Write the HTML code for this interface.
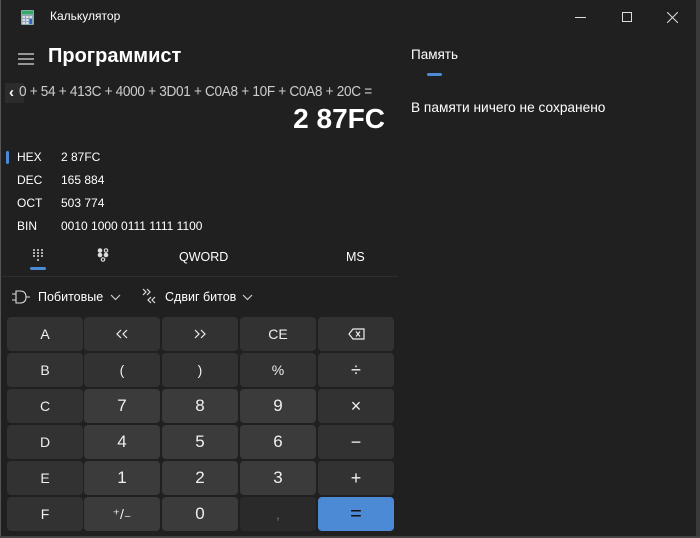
<!DOCTYPE html>
<html><head><meta charset="utf-8"><style>
*{margin:0;padding:0;box-sizing:border-box}
body{width:700px;height:538px;background:#202020;font-family:"Segoe UI","Liberation Sans","DejaVu Sans",sans-serif;color:#fff;position:relative;overflow:hidden}
.a{position:absolute;white-space:nowrap}
.k{position:absolute;border-radius:4px;background:#323232;display:flex;align-items:center;justify-content:center;font-size:14px;color:#f0f0f0;width:76px;height:34px}
.d{background:#3b3b3b;font-size:17px}
</style></head><body>
<div class="a" style="left:0;top:0;width:1px;height:538px;background:#555"></div>
<div class="a" style="left:696px;top:0;width:4px;height:538px;background:#3a3a3a"></div>
<div class="a" style="left:0;top:536px;width:700px;height:2px;background:#444"></div>
<svg class="a" style="left:21px;top:10px" width="13" height="15"><rect width="13" height="15" rx="1" fill="#8aa"/><rect x="1" y="1" width="11" height="3" fill="#3a6"/><g fill="#dde"><rect x="1.5" y="6" width="2.5" height="2"/><rect x="5" y="6" width="2.5" height="2"/><rect x="8.5" y="6" width="2.5" height="2"/><rect x="1.5" y="9" width="2.5" height="2"/><rect x="5" y="9" width="2.5" height="2"/><rect x="1.5" y="12" width="2.5" height="2"/><rect x="5" y="12" width="2.5" height="2"/></g><rect x="8.5" y="9" width="2.5" height="5" fill="#36c"/></svg>
<div class="a" style="left:50px;top:9px;font-size:12px">Калькулятор</div>
<div class="a" style="left:575px;top:17px;width:11px;height:1px;background:#ddd"></div>
<div class="a" style="left:622px;top:12px;width:10px;height:10px;border:1px solid #ddd"></div>
<svg class="a" style="left:667px;top:12px" width="11" height="11"><path d="M0 0L11 11M11 0L0 11" stroke="#ddd" stroke-width="1"/></svg>
<svg class="a" style="left:18px;top:53px" width="16" height="12"><path d="M0 1H16M0 6H16M0 11H16" stroke="#ddd" stroke-width="1.3"/></svg>
<div class="a" style="left:48px;top:45px;font-size:20px;font-weight:bold">Программист</div>
<div class="a" style="left:5px;top:83px;width:19px;height:20px;background:#2c2c2c"></div>
<div class="a" style="left:9px;top:84px;font-size:15px;font-weight:bold">‹</div>
<div class="a" style="left:19px;top:84px;font-size:14.5px;color:#ccc;letter-spacing:-0.35px;transform:scaleX(0.94);transform-origin:0 0">0 + 54 + 413C + 4000 + 3D01 + C0A8 + 10F + C0A8 + 20C =</div>
<div class="a" style="right:315px;top:103px;font-size:28px;font-weight:bold">2 87FC</div>
<div class="a" style="left:6px;top:151px;width:3px;height:13px;border-radius:2px;background:#4c8ad6"></div>
<div class="a" style="left:17px;top:150px;font-size:12px">HEX</div><div class="a" style="left:61px;top:150px;font-size:12px">2 87FC</div>
<div class="a" style="left:17px;top:173px;font-size:12px">DEC</div><div class="a" style="left:61px;top:173px;font-size:12px">165 884</div>
<div class="a" style="left:17px;top:196px;font-size:12px">OCT</div><div class="a" style="left:61px;top:196px;font-size:12px">503 774</div>
<div class="a" style="left:17px;top:219px;font-size:12px">BIN</div><div class="a" style="left:61px;top:219px;font-size:12px">0010 1000 0111 1111 1100</div>
<svg class="a" style="left:32px;top:248px" width="12" height="14" fill="#ddd"><circle cx="2" cy="2" r="1"/><circle cx="6" cy="2" r="1"/><circle cx="10" cy="2" r="1"/><circle cx="2" cy="5" r="1"/><circle cx="6" cy="5" r="1"/><circle cx="10" cy="5" r="1"/><circle cx="2" cy="8" r="1"/><circle cx="6" cy="8" r="1"/><circle cx="10" cy="8" r="1"/><circle cx="6" cy="12" r="1"/></svg>
<div class="a" style="left:30px;top:267px;width:16px;height:3px;border-radius:2px;background:#4c8ad6"></div>
<svg class="a" style="left:97px;top:248px" width="12" height="14" fill="none" stroke="#ddd" stroke-width="1.2"><circle cx="3" cy="2.5" r="1.7" fill="#ddd"/><circle cx="9" cy="2.5" r="1.7"/><circle cx="3" cy="7" r="1.7" fill="#ddd"/><circle cx="9" cy="7" r="1.7" fill="#ddd"/><circle cx="6" cy="11.5" r="1.7"/></svg>
<div class="a" style="left:179px;top:250px;font-size:12.5px">QWORD</div>
<div class="a" style="left:346px;top:250px;font-size:12.5px">MS</div>
<div class="a" style="left:2px;top:276px;width:396px;height:1px;background:#2e2e2e"></div>
<svg class="a" style="left:12px;top:290px" width="18" height="14" fill="none" stroke="#ddd" stroke-width="1.1"><path d="M0 4H4M0 10H4M4 1V13H8Q14 13 14 7Q14 1 8 1ZM14 7H18"/></svg>
<div class="a" style="left:38px;top:290px;font-size:12.5px">Побитовые</div>
<svg class="a" style="left:110px;top:294px" width="11" height="7" fill="none" stroke="#ccc" stroke-width="1.2"><path d="M1 1L5.5 5.5L10 1"/></svg>
<svg class="a" style="left:142px;top:288px" width="14" height="17" fill="none" stroke="#ddd" stroke-width="1.2"><path d="M1 1L4 4L1 7M5 1L8 4L5 7M13 9L10 12L13 15M9 9L6 12L9 15"/></svg>
<div class="a" style="left:165px;top:290px;font-size:12.5px">Сдвиг битов</div>
<svg class="a" style="left:242px;top:294px" width="11" height="7" fill="none" stroke="#ccc" stroke-width="1.2"><path d="M1 1L5.5 5.5L10 1"/></svg>
<div class="k" style="left:7px;top:317px">A</div>
<div class="k" style="left:84px;top:317px"><svg width="12" height="10" fill="none" stroke="#eee" stroke-width="1.2"><path d="M5 1L1 5L5 9M11 1L7 5L11 9"/></svg></div>
<div class="k" style="left:162px;top:317px"><svg width="12" height="10" fill="none" stroke="#eee" stroke-width="1.2"><path d="M1 1L5 5L1 9M7 1L11 5L7 9"/></svg></div>
<div class="k" style="left:240px;top:317px">CE</div>
<div class="k" style="left:318px;top:317px"><svg width="17" height="12" fill="none" stroke="#eee" stroke-width="1.2"><path d="M5 1H16V11H5L1 6Z M8 3.5L12 8.5M12 3.5L8 8.5"/></svg></div>
<div class="k" style="left:7px;top:353px">B</div>
<div class="k" style="left:84px;top:353px">(</div>
<div class="k" style="left:162px;top:353px">)</div>
<div class="k" style="left:240px;top:353px">%</div>
<div class="k" style="left:318px;top:353px;font-size:18px">÷</div>
<div class="k" style="left:7px;top:389px">C</div>
<div class="k d" style="left:84px;top:389px">7</div>
<div class="k d" style="left:162px;top:389px">8</div>
<div class="k d" style="left:240px;top:389px">9</div>
<div class="k" style="left:318px;top:389px;font-size:18px">×</div>
<div class="k" style="left:7px;top:425px">D</div>
<div class="k d" style="left:84px;top:425px">4</div>
<div class="k d" style="left:162px;top:425px">5</div>
<div class="k d" style="left:240px;top:425px">6</div>
<div class="k" style="left:318px;top:425px;font-size:18px">−</div>
<div class="k" style="left:7px;top:461px">E</div>
<div class="k d" style="left:84px;top:461px">1</div>
<div class="k d" style="left:162px;top:461px">2</div>
<div class="k d" style="left:240px;top:461px">3</div>
<div class="k" style="left:318px;top:461px;font-size:18px">+</div>
<div class="k" style="left:7px;top:497px">F</div>
<div class="k d" style="left:84px;top:497px;font-size:14px">⁺/₋</div>
<div class="k d" style="left:162px;top:497px">0</div>
<div class="k" style="left:240px;top:497px;background:#2a2a2a;color:#777">,</div>
<div class="k" style="left:318px;top:497px;background:#4c8ad6;color:#111;font-size:20px">=</div>
<div class="a" style="left:411px;top:47px;font-size:13.5px">Память</div>
<div class="a" style="left:427px;top:73px;width:15px;height:3px;border-radius:2px;background:#4c8ad6"></div>
<div class="a" style="left:411px;top:100px;font-size:13.7px">В памяти ничего не сохранено</div>
</body></html>
